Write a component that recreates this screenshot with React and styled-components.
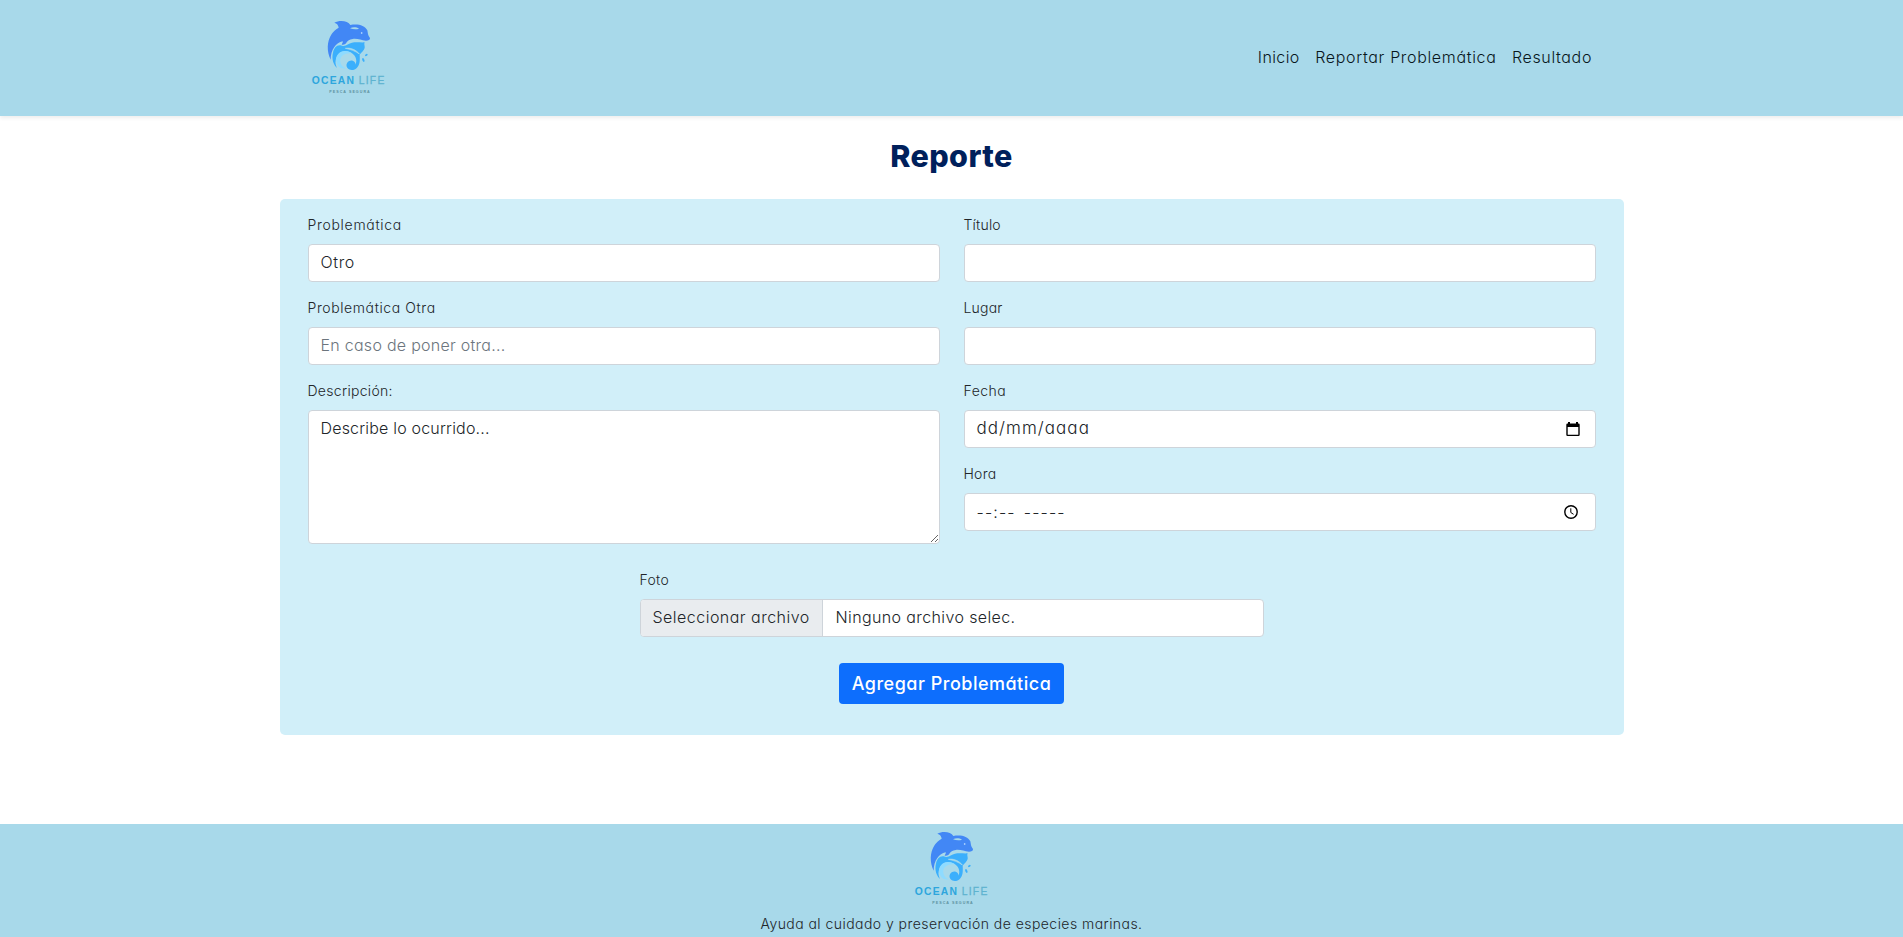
import React from "react";
import styled, { createGlobalStyle, css } from "styled-components";

const GlobalStyle = createGlobalStyle`
  *, *::before, *::after { box-sizing: border-box; }
  html, body { margin: 0; }
  body {
    background: #fff;
    color: #212529;
    font-family: Inter, "Open Sans", sans-serif;
    font-feature-settings: "cv11";
    font-size: 16px;
    font-weight: 350;
    line-height: 1.5;
  }
`;

const tracking = css`
  letter-spacing: ${(p) => p.$track || 0}px;
`;

const Header = styled.header`
  height: 116px;
  background: #a8d9ea;
  box-shadow: 0 2px 4px rgba(0, 0, 0, 0.075);
`;

const HeaderInner = styled.div`
  width: 1287px;
  margin: 0 auto;
  padding: 15px 3px 0 0;
  display: flex;
  justify-content: space-between;
`;

const Nav = styled.nav`
  display: flex;
  gap: 15.5px;
  padding-top: 30px;
`;

const NavLink = styled.a`
  ${tracking}
  color: #08171c;
  white-space: nowrap;
`;

const Title = styled.h1`
  ${tracking}
  margin: 16px 0 20px;
  font-size: 30.5px;
  line-height: 47px;
  font-weight: 800;
  color: #00205b;
  text-align: center;
`;

const Panel = styled.form`
  width: 1344px;
  height: 536px;
  margin: 0 auto;
  padding: 16px 28px;
  border-radius: 5px;
  background: #d1eff9;
  display: flex;
  flex-direction: column;
  align-items: center;
`;

const Columns = styled.div`
  width: 100%;
  height: 355px;
  display: grid;
  grid-template-columns: 1fr 1fr;
  gap: 24px;
`;

const Column = styled.div`
  display: flex;
  flex-direction: column;
  gap: 16px;
`;

const Field = styled.label`
  display: flex;
  flex-direction: column;
  gap: 10px;
  width: ${(p) => p.$width || "100%"};
`;

const Caption = styled.span`
  ${tracking}
  font-size: 14px;
  line-height: 19px;
`;

const control = css`
  ${tracking}
  width: 100%;
  height: 38px;
  margin: 0;
  padding: 5px 12px 7px;
  border: 1px solid #ced4da;
  border-radius: 4px;
  background: #fff;
  color: #212529;
  font: inherit;
  font-feature-settings: inherit;
  appearance: none;
  outline: none;
`;

const Select = styled.select`
  ${control}
`;

const Input = styled.input`
  ${control}
  &::placeholder {
    color: #6c757d;
    opacity: 1;
  }
`;

const TextArea = styled.textarea`
  ${control}
  height: 134px;
  resize: vertical;
`;

const Picker = styled.span`
  ${control}
  padding: 6px ${(p) => p.$end}px 6px 12px;
  display: flex;
  align-items: center;
  justify-content: space-between;
`;

const DateHint = styled.span`
  font-size: 17px;
  letter-spacing: 1.05px;
`;

const TimeHint = styled.span`
  display: flex;
  gap: 8px;
  letter-spacing: 1.15px;
`;

const FileBox = styled.span`
  ${control}
  padding: 0;
  display: flex;
  overflow: hidden;
`;

const FileButton = styled.span`
  flex: none;
  width: 182px;
  padding: 5px 0 7px 12px;
  border-right: 1px solid #ced4da;
  background: #e9ecef;
  white-space: nowrap;
  letter-spacing: 0.48px;
`;

const FileName = styled.span`
  padding: 5px 13px 7px;
  letter-spacing: 0.38px;
`;

const Submit = styled.button`
  width: 225px;
  height: 41px;
  margin-top: 26px;
  padding: 0;
  border: 0;
  border-radius: 4px;
  background: #0d6efd;
  color: #fff;
  font: inherit;
  font-feature-settings: inherit;
  font-size: 18px;
  font-weight: 500;
  letter-spacing: 0.5px;
`;

const Footer = styled.footer`
  height: 113px;
  margin-top: 89px;
  padding-top: 2px;
  background: #a8d9ea;
  display: flex;
  flex-direction: column;
  align-items: center;
`;

const Tagline = styled.p`
  margin: 7px 0 0;
  font-size: 14px;
  letter-spacing: 0.45px;
`;

function Logo() {
  return (
    <svg width="81" height="80" viewBox="24 15 243 240" fontFamily="Liberation Sans, sans-serif">
      <path fill="#4287f5" d="M92 149C80 125 80 94 95 72C100 64 108 57 116 53C115 45 111 40 103 38C119 29 144 32 151 45C174 41 194 46 202 61C204 70 203 76 210 84C211 90 205 92 198 92C183 91 173 85 158 87C148 88 143 92 140 97C138 103 132 105 125 104C126 100 130 97 128 94C108 97 92 120 92 149Z" />
      <path d="M150 55C159 50 169 51 177 56C168 59 159 58 150 55Z" fill="#a8d9ea" />
      <circle cx="185" cy="69" r="2.5" fill="#d5edff" />
      <path fill="#3baffc" d="M99 128C102 112 112 102 126 107C137 111 145 100 156 98C169 95 180 98 194 97C191 103 195 107 194 114C192 122 184 127 179 134C180 150 180 164 171 173C164 181 150 183 143 175C134 164 144 149 158 152C165 154 167 160 166 164C172 155 169 139 156 130C138 117 112 125 107 151C105 160 108 167 111 174C101 165 94 147 99 128Z" />
      <path d="M136 115C151 112 168 119 178 132C166 123 151 118 136 115Z" fill="#a8d9ea" stroke="#a8d9ea" strokeWidth="2" />
      <path d="M109 154C105 139 117 124 133 123C145 122 154 127 157 131C135 126 118 139 121 156C122 164 128 172 137 175C121 178 111 168 109 154Z" fill="#8edbff" />
      <ellipse cx="190" cy="150" rx="3" ry="6" transform="rotate(-25 190 150)" fill="#3baffc" />
      <ellipse cx="199" cy="135" rx="4.5" ry="2.7" transform="rotate(-35 199 135)" fill="#3baffc" />
      <text x="35" y="221" fontSize="31" fontWeight="700" textLength="127" fill="#2ea6dd">OCEAN</text>
      <text x="176" y="221" fontSize="31" textLength="77" fill="#5eb3d0" stroke="#5eb3d0" strokeWidth="0.8">LIFE</text>
      <text x="88" y="249" fontSize="11" fontWeight="700" textLength="121" fill="#5d919f">PESCA SEGURA</text>
    </svg>
  );
}

function CalendarIcon() {
  return (
    <svg width="14" height="15" viewBox="0 0 14 15" aria-hidden="true">
      <path d="M2 0h2v1.5h6V0h2v1.5h.5A1.2 1.2 0 0 1 13.7 2.7v10.1a1.2 1.2 0 0 1-1.2 1.2h-11A1.2 1.2 0 0 1 .3 12.8V2.7a1.2 1.2 0 0 1 1.2-1.2H2zM1.7 5v7.7h10.6V5z" fill="#000" fillRule="evenodd" />
    </svg>
  );
}

function ClockIcon() {
  return (
    <svg width="14" height="14" viewBox="0 0 14 14" fill="none" stroke="#000" aria-hidden="true">
      <circle cx="7" cy="7" r="6.2" strokeWidth="1.4" />
      <path d="M6.8 3.3v4.2l2.8 1.8" strokeWidth="1" />
    </svg>
  );
}

export default function App() {
  return (
    <>
      <GlobalStyle />
      <Header>
        <HeaderInner>
          <Logo />
          <Nav>
            <NavLink $track={0.4}>Inicio</NavLink>
            <NavLink $track={0.67}>Reportar Problemática</NavLink>
            <NavLink $track={0.63}>Resultado</NavLink>
          </Nav>
        </HeaderInner>
      </Header>
      <Title $track={0.4}>Reporte</Title>
      <Panel>
        <Columns>
          <Column>
            <Field>
              <Caption $track={0.7}>Problemática</Caption>
              <Select $track={0.65}><option>Otro</option></Select>
            </Field>
            <Field>
              <Caption $track={0.6}>Problemática Otra</Caption>
              <Input $track={0.27} placeholder="En caso de poner otra..." />
            </Field>
            <Field>
              <Caption $track={0.3}>Descripción:</Caption>
              <TextArea $track={0.19} defaultValue="Describe lo ocurrido..." />
            </Field>
          </Column>
          <Column>
            <Field>
              <Caption $track={0.2}>Título</Caption>
              <Input />
            </Field>
            <Field>
              <Caption $track={0.2}>Lugar</Caption>
              <Input />
            </Field>
            <Field>
              <Caption $track={0.45}>Fecha</Caption>
              <Picker $end={15}><DateHint>dd/mm/aaaa</DateHint><CalendarIcon /></Picker>
            </Field>
            <Field>
              <Caption $track={0.25}>Hora</Caption>
              <Picker $end={17}>
                <TimeHint><span>--:--</span><span>-----</span></TimeHint>
                <ClockIcon />
              </Picker>
            </Field>
          </Column>
        </Columns>
        <Field $width="624px">
          <Caption $track={0.3}>Foto</Caption>
          <FileBox>
            <FileButton>Seleccionar archivo</FileButton>
            <FileName>Ninguno archivo selec.</FileName>
          </FileBox>
        </Field>
        <Submit type="button">Agregar Problemática</Submit>
      </Panel>
      <Footer>
        <Logo />
        <Tagline>Ayuda al cuidado y preservación de especies marinas.</Tagline>
      </Footer>
    </>
  );
}
